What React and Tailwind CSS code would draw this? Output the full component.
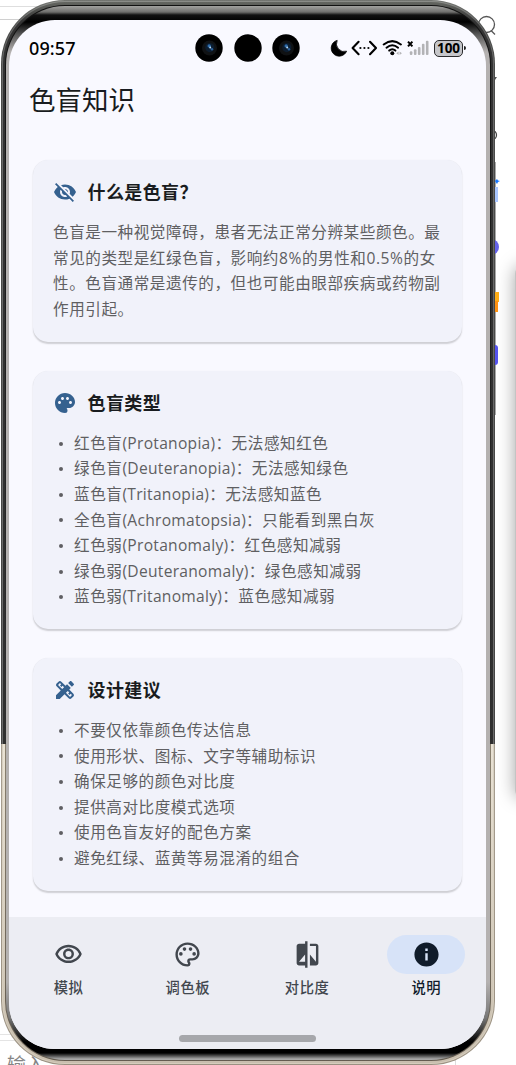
import React from 'react';
import {
  MdCompare,
  MdDesignServices,
  MdInfo,
  MdOutlinePalette,
  MdOutlineVisibility,
  MdPalette,
  MdVisibilityOff,
} from 'react-icons/md';

const TYPES = [
  { name: '红色盲', latin: '(Protanopia)', desc: '：无法感知红色' },
  { name: '绿色盲', latin: '(Deuteranopia)', desc: '：无法感知绿色' },
  { name: '蓝色盲', latin: '(Tritanopia)', desc: '：无法感知蓝色' },
  { name: '全色盲', latin: '(Achromatopsia)', desc: '：只能看到黑白灰' },
  { name: '红色弱', latin: '(Protanomaly)', desc: '：红色感知减弱' },
  { name: '绿色弱', latin: '(Deuteranomaly)', desc: '：绿色感知减弱' },
  { name: '蓝色弱', latin: '(Tritanomaly)', desc: '：蓝色感知减弱' },
];

const TIPS = [
  { name: '不要仅依靠颜色传达信息' },
  { name: '使用形状、图标、文字等辅助标识' },
  { name: '确保足够的颜色对比度' },
  { name: '提供高对比度模式选项' },
  { name: '使用色盲友好的配色方案' },
  { name: '避免红绿、蓝黄等易混淆的组合' },
];

const TABS = [
  { label: '模拟', icon: MdOutlineVisibility },
  { label: '调色板', icon: MdOutlinePalette },
  { label: '对比度', icon: MdCompare },
  { label: '说明', icon: MdInfo, active: true },
];

/* Punch-hole camera; the lens glint is optional */
const Camera = ({ glint = false }) => (
  <svg width="28" height="28" viewBox="0 0 28 28">
    <circle cx="14" cy="14" r="13.7" fill="#000" />
    {glint && (
      <>
        <circle cx="14.5" cy="14" r="7.5" fill="#101214" />
        <circle cx="14.8" cy="13.6" r="4.6" fill="#0c1d30" />
        <circle cx="14.2" cy="11.9" r="1.7" fill="#2f6cab" />
        <circle cx="15.2" cy="13.4" r="1" fill="#b9dcfa" />
        <circle cx="17" cy="15.2" r="1.2" fill="#2c629c" />
      </>
    )}
  </svg>
);

/* Moon, dev mode, wifi, no-signal and battery */
const StatusIcons = () => (
  <div className="flex h-[20px] items-center">
    <svg width="106" height="20" viewBox="0 0 106 20">
      <path d="M7.2 2.4A8 8 0 1 0 16.6 13.2A7.8 7.8 0 0 1 7.2 2.4Z" fill="#000" stroke="#000" strokeWidth="0.8" />
      <g fill="none" stroke="#000" strokeWidth="2.1" strokeLinecap="round" strokeLinejoin="round">
        <path d="M28.6 3.8L22.6 10L28.6 16.2M40 3.8L46 10L40 16.2" />
      </g>
      <g fill="#000">
        <circle cx="30.4" cy="10" r="1.1" />
        <circle cx="34.4" cy="10" r="1.1" />
        <circle cx="38.4" cy="10" r="1.1" />
      </g>
      <g fill="none" stroke="#000" strokeWidth="2" strokeLinecap="round">
        <path d="M53.7 6.5Q62.3-.2 70.9 6.5" />
        <path d="M56.5 9.7Q62.3 4.8 68.1 9.7" />
        <path d="M59.2 12.6Q62.3 10 65.4 12.6" />
      </g>
      <circle cx="62.3" cy="15.3" r="2" fill="#000" />
      <path d="M66.3 15.2L68.6 13.5V16.9ZM71.9 15.2L69.6 13.5V16.9Z" fill="#b4b4b6" />
      <path d="M78 3.6L82.4 8.4M82.4 3.6L78 8.4" stroke="#000" strokeWidth="2" />
      <g fill="#b3b3b6">
        <rect x="79.8" y="13.3" width="2.6" height="3.7" rx="1" />
        <rect x="83.9" y="11.3" width="2.6" height="5.7" rx="1" />
        <rect x="87.9" y="9" width="2.6" height="8" rx="1" />
        <rect x="91.9" y="5.8" width="2.6" height="11.2" rx="1" />
        <rect x="95.9" y="2.7" width="2.6" height="14.3" rx="1" />
      </g>
    </svg>
    <div className="-ml-[2px] flex h-[17px] w-[29px] items-center justify-center rounded-[5px] border-[1.5px] border-[#2b2b2d] bg-[#c6c6ca] pt-px font-['Noto_Sans'] text-[13.5px] font-bold leading-none tracking-[-0.1px] text-black">
      100
    </div>
    <div className="ml-[1px] h-[4px] w-[2px] rounded-r bg-[#222]" />
  </div>
);

const Card = ({ icon: Icon, title, children }) => (
  <section className="rounded-[15px] bg-[#f1f2fa] px-5 pb-[19.2px] pt-[20.4px] shadow-[0_1.5px_1.5px_rgba(0,0,0,0.17),0_0_1px_rgba(0,0,0,0.06)]">
    <div className="mb-[15.8px] flex h-6 items-center gap-[10.5px]">
      <Icon size={24} className="text-[#35618f]" />
      <h2 className="text-[18px] font-bold leading-6 tracking-[0.4px] text-[#191c20]">{title}</h2>
    </div>
    {children}
  </section>
);

const BulletList = ({ items }) => (
  <ul>
    {items.map(({ name, latin, desc }) => (
      <li key={name} className="flex h-[25.6px] items-center whitespace-nowrap">
        <span className="ml-[6px] mr-[11px] size-[4px] rounded-full bg-[#5f5f62]" />
        <span>
          {name}
          {latin && <span className="tracking-[0.28px]">{latin}</span>}
          {desc}
        </span>
      </li>
    ))}
  </ul>
);

/* Whatever peeks out around the phone body */
const Backdrop = () => (
  <div className="absolute inset-0">
    <div className="absolute left-0 top-[6px] h-px w-[60px] bg-[#dedede]" />
    <div className="absolute left-0 top-[19px] h-px w-[40px] bg-[#d0d0d0]" />
    <div className="absolute left-0 top-[1034px] h-px w-[30px] bg-[#e4e4e4]" />
    <div className="absolute left-0 top-[1040px] h-px w-[30px] bg-[#e4e4e4]" />
    <div className="absolute left-[455px] top-[1060px] h-[5px] w-px bg-[#ddd]" />
    <div className="absolute left-[7px] top-[1052px] whitespace-nowrap text-[19px] leading-[26px] text-[#858585]">输入</div>
    <svg className="absolute left-[476px] top-[12px]" width="22" height="25" viewBox="0 0 22 25" fill="none" stroke="#555" strokeWidth="1.3">
      <circle cx="10.5" cy="12.5" r="8" />
      <path d="M15 18.5L19 22.5" />
    </svg>
    <svg className="absolute left-[490px] top-[70px]" width="12" height="360" viewBox="0 0 12 360">
      <path d="M3 7H7L5 10Z" fill="#555" />
      <circle cx="2" cy="65" r="4.5" fill="none" stroke="#444" strokeWidth="1.3" />
      <path d="M5 92V345" stroke="#555" />
      <path d="M7 109L8 110.5L10 111L8 112L7 114L5 111Z" fill="#1677ff" />
      <rect x="2" y="117" width="6" height="15" fill="#a9c6ff" />
      <circle cx="1" cy="177" r="8" fill="#6462e8" />
      <rect x="2" y="222" width="7" height="10" fill="#ffae17" />
      <rect x="2" y="231" width="6" height="11" fill="#ff9212" />
      <rect x="0" y="275" width="8" height="20" rx="3" fill="#5654ee" />
    </svg>
    <div className="absolute left-[515px] top-[266px] h-[532px] w-[30px] rounded-[8px] bg-[#c4c4c4] shadow-[0_0_18px_rgba(0,0,0,0.36)]" />
  </div>
);

export default function App() {
  return (
    <div className="relative h-[1065px] w-[516px] overflow-hidden bg-white font-['Open_Sans','Noto_Sans_CJK_SC',sans-serif]">
      <Backdrop />

      {/* Metal body: dark down to the antenna line, champagne below */}
      <div className="relative ml-px h-[1065px] w-[494px] rounded-[64px] bg-[linear-gradient(to_bottom,#737571_0px,#4b4c4a_30px,#444_744px,#a89f90_744px,#9b9182_100%)] p-px">
        <div className="h-full rounded-[63px] bg-[linear-gradient(to_bottom,#8b8d89_0px,#666_20px,#6b6b6b_743px,#d6cfc1_743px,#d5ccbc_100%)] p-px">
          <div className="h-full rounded-[62px] bg-[linear-gradient(to_bottom,#646661_0px,#333_20px,#303030_742px,#e9e2d4_742px,#c8beae_100%)] px-[2px] pb-[2px] pt-[3px]">
            <div className="h-full rounded-[60px] bg-[linear-gradient(to_bottom,#111_0px,#303030_739px,#89806f_739px,#645c50_100%)] p-px">
              {/* Glass edge */}
              <div className="h-full rounded-[59px] bg-[linear-gradient(to_bottom,#a2a2a0_0px,#70706e_6px,#111_9px,#000_16px,#555_28px,#b4b1b0_46px,#b4b1b0_976px,#777_1012px,#000_1036px,#000_1047px,#a8a8a8_1053px)] pb-[11px] pl-[3px] pr-[4px] pt-[14px]">
                <div className="flex h-full flex-col overflow-hidden rounded-[46px] bg-[#f9f9ff]">
                  <header className="grid h-[56px] grid-cols-[1fr_auto_1fr] items-center pl-[20px] pr-[20px]">
                    <span className="font-['Noto_Sans'] text-[18px] font-medium leading-none tracking-[0.1px] text-black">09:57</span>
                    <div className="flex gap-[10.3px]">
                      <Camera glint />
                      <Camera />
                      <Camera glint />
                    </div>
                    <div className="flex justify-end">
                      <StatusIcons />
                    </div>
                  </header>

                  <h1 className="pl-[20px] pt-[4px] text-[26.5px] font-normal leading-[40px] text-[#191c20]">色盲知识</h1>

                  <main className="flex flex-1 flex-col gap-[28.8px] px-[24px] pt-[40px] text-[15.6px] leading-[25.6px] tracking-[0.55px] text-[#5f5f62]">
                    <Card icon={MdVisibilityOff} title="什么是色盲？">
                      <p className="-mr-3 whitespace-nowrap">
                        色盲是一种视觉障碍，患者无法正常分辨某些颜色。最
                        <br />
                        常见的类型是红绿色盲，影响约8%的男性和0.5%的女
                        <br />
                        性。色盲通常是遗传的，但也可能由眼部疾病或药物副
                        <br />
                        作用引起。
                      </p>
                    </Card>
                    <Card icon={MdPalette} title="色盲类型">
                      <BulletList items={TYPES} />
                    </Card>
                    <Card icon={MdDesignServices} title="设计建议">
                      <BulletList items={TIPS} />
                    </Card>
                  </main>

                  <nav className="flex h-[132px] flex-col justify-between bg-[#ecedf3] pb-[7px] pt-[17.5px]">
                    <div className="grid grid-cols-4">
                      {TABS.map(({ label, icon: Icon, active }) => (
                        <div
                          key={label}
                          className={`flex flex-col items-center gap-[4px] ${active ? 'text-[#101c2b]' : 'text-[#42474e]'}`}
                        >
                          <div
                            className={`flex h-[39px] w-[78px] items-center justify-center rounded-full ${active ? 'bg-[#d7e3f8]' : ''}`}
                          >
                            <Icon size={29} />
                          </div>
                          <span className="text-[14.3px] font-medium leading-5 tracking-[0.6px]">{label}</span>
                        </div>
                      ))}
                    </div>
                    <div className="mx-auto h-[7px] w-[137px] rounded-full bg-[#a6a7ab]" />
                  </nav>
                </div>
              </div>
            </div>
          </div>
        </div>
      </div>
    </div>
  );
}
